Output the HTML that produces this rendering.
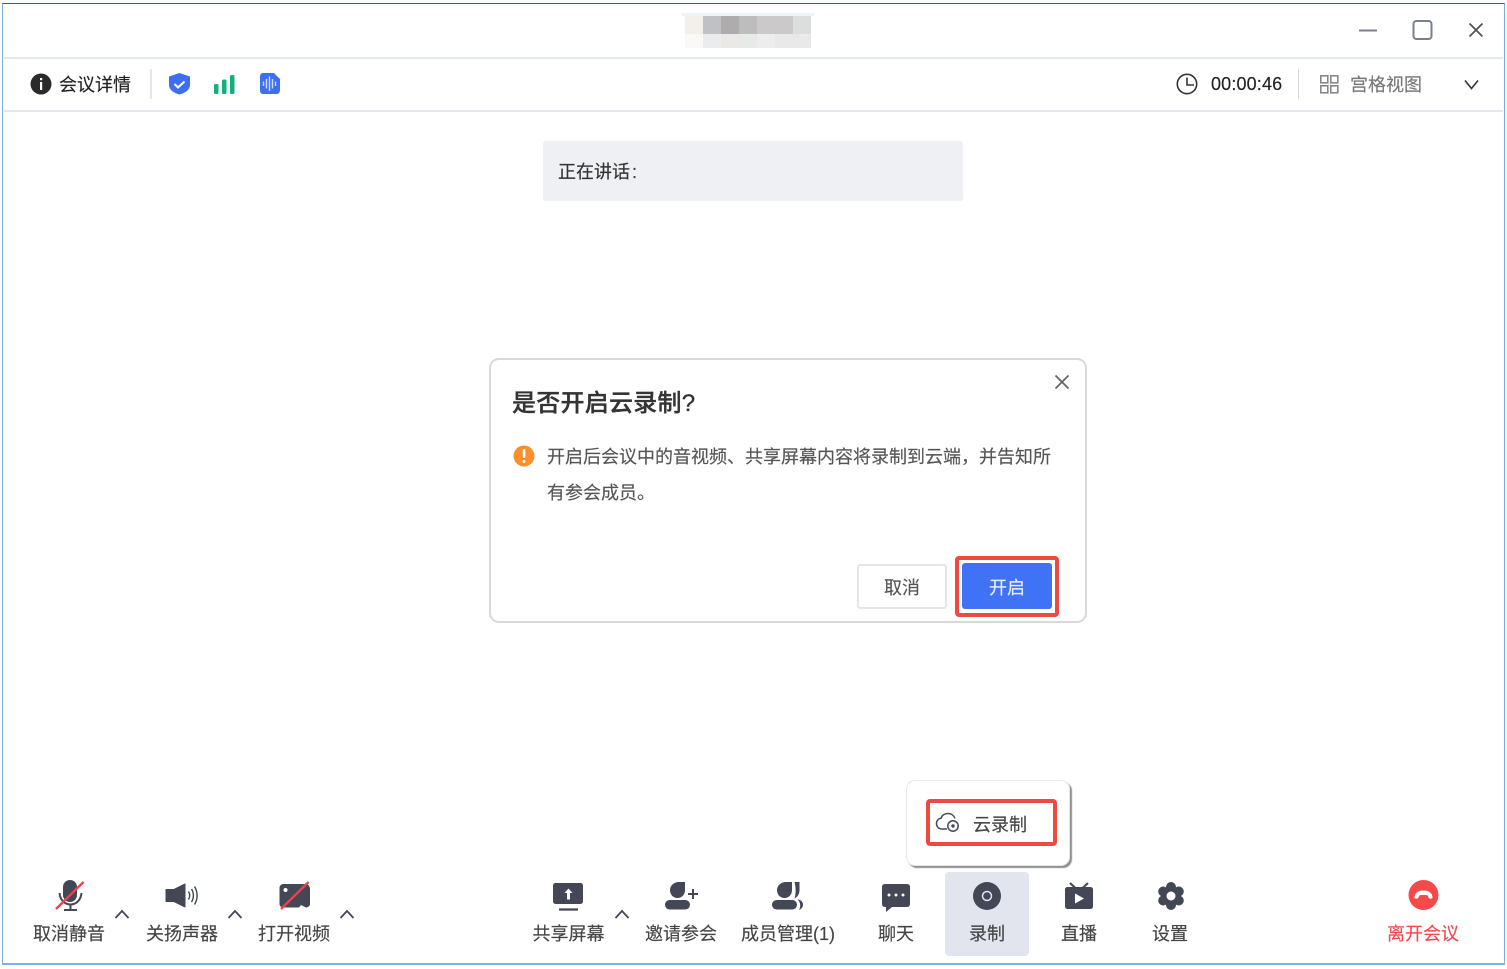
<!DOCTYPE html>
<html lang="zh"><head><meta charset="utf-8"><title>会议</title>
<style>
html,body{margin:0;padding:0;background:#fff;}
body{width:1507px;height:969px;position:relative;overflow:hidden;font-family:"Liberation Sans","Noto Sans CJK SC",sans-serif;}
.a{position:absolute;}
.t{position:absolute;white-space:nowrap;font-size:18px;line-height:24px;color:#444;-webkit-text-stroke:.15px currentColor;}
.c{transform:translateX(-50%);}
.b{position:absolute;}
</style></head><body>
<!-- window frame -->
<div class="a" style="left:2px;top:3px;width:1501px;height:959px;border-left:1.5px solid #7db0e2;border-right:1.5px solid #7db0e2;border-bottom:2.5px solid #7db0e2;border-top:1.5px solid #1f66ad;box-sizing:content-box;"></div>
<div class="a" style="left:4px;top:57px;width:1499px;height:2px;background:#e4e6ef;"></div>
<div class="a" style="left:4px;top:109.500px;width:1499px;height:2px;background:#e4e6ef;"></div>
<div class="a" style="left:150px;top:69px;width:2px;height:30px;background:#e6e6e6;"></div>
<div class="a" style="left:1298px;top:69px;width:1px;height:30px;background:#d6d6d6;"></div>

<!-- blurred title -->
<div class="a" style="left:682px;top:13px;width:132px;height:3px;background:#f0f3f5;"></div>
<div class="b" style="left:685px;top:16px;width:18px;height:18px;background:#f3f0ec;"></div>
<div class="b" style="left:703px;top:16px;width:18px;height:18px;background:#c0c1c5;"></div>
<div class="b" style="left:721px;top:16px;width:18px;height:18px;background:#aeacac;"></div>
<div class="b" style="left:739px;top:16px;width:18px;height:18px;background:#bdbdbd;"></div>
<div class="b" style="left:757px;top:16px;width:36px;height:18px;background:#cbc9c9;"></div>
<div class="b" style="left:793px;top:16px;width:18px;height:18px;background:#dcdedd;"></div>
<div class="b" style="left:685px;top:34px;width:18px;height:14px;background:#faf9f7;"></div>
<div class="b" style="left:703px;top:34px;width:18px;height:14px;background:#eaecee;"></div>
<div class="b" style="left:721px;top:34px;width:18px;height:14px;background:#ebe9e6;"></div>
<div class="b" style="left:739px;top:34px;width:18px;height:14px;background:#e8eaea;"></div>
<div class="b" style="left:757px;top:34px;width:18px;height:14px;background:#ededed;"></div>
<div class="b" style="left:775px;top:34px;width:36px;height:14px;background:#e9e9e9;"></div>

<!-- speaking bar -->
<div class="a" style="left:543px;top:141px;width:420px;height:60px;background:#eff0f4;border-radius:3px;"></div>
<div class="t" style="left:558px;top:160px;color:#333;">正在讲话<span style="margin-left:2px;">:</span></div>

<!-- top text -->
<div class="t" style="left:59px;top:73px;color:#222;">会议详情</div>
<div class="t" style="left:1211px;top:72px;color:#222;letter-spacing:.15px;">00:00:46</div>
<div class="t" style="left:1350px;top:73px;color:#777;">宫格视图</div>

<!-- dialog -->
<div class="a" style="left:489px;top:358px;width:594px;height:261px;background:#fff;border:2px solid #d9d9d9;border-radius:10px;"></div>
<div class="t" style="left:512px;top:388px;font-size:24px;line-height:32px;font-weight:500;color:#333;-webkit-text-stroke:.35px #333;letter-spacing:.25px;">是否开启云录制?</div>
<div class="t" style="left:547px;top:445px;color:#555;">开启后会议中的音视频、共享屏幕内容将录制到云端&#xFF0C;并告知所</div>
<div class="t" style="left:547px;top:481px;color:#555;">有参会成员。</div>
<div class="a" style="left:857px;top:564px;width:86px;height:41px;border:2px solid #e6e6e6;border-radius:3px;background:#fff;"></div>
<div class="t c" style="left:902px;top:576px;color:#555;">取消</div>
<div class="a" style="left:955px;top:556px;width:96px;height:53px;border:4px solid #ef4a42;border-radius:4px;"></div>
<div class="a" style="left:962px;top:563px;width:90px;height:46px;background:#3f72f4;border-radius:3px;"></div>
<div class="t c" style="left:1007px;top:576px;color:#e8eeff;">开启</div>

<!-- popup -->
<div class="a" style="left:906px;top:780px;width:162px;height:84px;background:#fff;border:1px solid #e6e8f0;border-radius:9px;box-shadow:2px 2px 1px #8f8f8f;"></div>
<div class="a" style="left:926px;top:799px;width:123px;height:39px;border:4px solid #ef4a42;border-radius:4px;"></div>
<div class="t" style="left:973px;top:813px;color:#444;">云录制</div>

<!-- toolbar highlight -->
<div class="a" style="left:945px;top:872px;width:84px;height:84px;background:#e3e5ee;border-radius:4px;"></div>

<!-- toolbar labels -->
<div class="t c" style="left:69px;top:922px;">取消静音</div>
<div class="t c" style="left:182px;top:922px;">关扬声器</div>
<div class="t c" style="left:294px;top:922px;">打开视频</div>
<div class="t c" style="left:568.500px;top:922px;">共享屏幕</div>
<div class="t c" style="left:681px;top:922px;">邀请参会</div>
<div class="t c" style="left:788px;top:922px;">成员管理(1)</div>
<div class="t c" style="left:896px;top:922px;">聊天</div>
<div class="t c" style="left:987px;top:922px;">录制</div>
<div class="t c" style="left:1079px;top:922px;">直播</div>
<div class="t c" style="left:1170px;top:922px;">设置</div>
<div class="t c" style="left:1423px;top:922px;color:#f4474a;">离开会议</div>

<!-- icons -->
<svg class="a" style="left:0;top:0;" width="1507" height="969" viewBox="0 0 1507 969" fill="none">
<!-- window controls -->
<path d="M1359 30.500H1377" stroke="#7a7f8c" stroke-width="2"/>
<rect x="1413.500" y="21" width="18" height="18" rx="3" stroke="#7a7f8c" stroke-width="2"/>
<path d="M1469.500 23.500L1482.500 36.500M1482.500 23.500L1469.500 36.500" stroke="#555" stroke-width="1.800"/>

<!-- info -->
<circle cx="41" cy="84" r="10.500" fill="#2a2a2a"/>
<rect x="40" y="82" width="2.200" height="8" fill="#fff"/><rect x="40" y="78" width="2.200" height="2.200" fill="#fff"/>
<!-- shield -->
<path d="M179.500 73L190 76.500V85C190 90 185 93 179.500 94.500C174 93 169 90 169 85V76.500Z" fill="#3d6ff0"/>
<path d="M174.500 84L178 87.500L184.500 81.500" stroke="#fff" stroke-width="2"/>
<!-- signal -->
<rect x="214" y="84" width="4.500" height="10" rx="1.500" fill="#12b07a"/>
<rect x="222" y="79.500" width="4.500" height="14.500" rx="1.500" fill="#12b07a"/>
<rect x="230" y="75" width="4.500" height="19" rx="1.500" fill="#12b07a"/>
<!-- audio badge -->
<path d="M263 73H274L280 79V90C280 92.500 278.500 94 276.500 94H263C261 94 260 92.500 260 90V77C260 74.500 261 73 263 73Z" fill="#3d6ff0"/>
<path d="M263.500 81.500V86M266.500 79V88.500M269.500 76.500V91M272.500 79V88.500M275.500 81.500V86" stroke="#cddcff" stroke-width="1.400"/>
<!-- clock -->
<circle cx="1187" cy="84" r="9.700" stroke="#333" stroke-width="1.600"/>
<path d="M1187 77.500V85H1194" stroke="#333" stroke-width="1.600"/>
<!-- grid -->
<g stroke="#888" stroke-width="1.600">
<rect x="1320.800" y="75.800" width="7" height="7"/><rect x="1330.800" y="75.800" width="7" height="7"/>
<rect x="1320.800" y="85.800" width="7" height="7"/><rect x="1330.800" y="85.800" width="7" height="7"/>
</g>
<path d="M1465 80.500L1471.500 88.500L1478 80.500" stroke="#333" stroke-width="1.600"/>

<!-- dialog icons -->
<path d="M1055.500 375.500L1068.500 388.500M1068.500 375.500L1055.500 388.500" stroke="#666" stroke-width="1.800"/>
<circle cx="524" cy="456" r="10.500" fill="#fa8f2c"/>
<rect x="522.800" y="449" width="2.600" height="9" rx="1.200" fill="#fff"/><circle cx="524" cy="461.500" r="1.500" fill="#fff"/>

<!-- cloud icon -->
<path d="M947 829H942C938.500 829 936.500 826.500 936.500 823.500C936.500 820.500 938.500 818.500 941 818.300C942 815 945 813.500 948 813.500C951.500 813.500 954 815.800 955 818.500" stroke="#444c5a" stroke-width="1.500"/>
<circle cx="953" cy="826" r="5.200" stroke="#444c5a" stroke-width="1.500"/><circle cx="953" cy="826" r="1.700" fill="#444c5a"/>

<!-- mic -->
<rect x="63" y="880" width="14" height="22" rx="7" fill="#434756"/>
<path d="M59.500 893C60 900 65 904.500 70.500 904.500C76 904.500 81 900 81.500 893" stroke="#434756" stroke-width="2"/>
<path d="M70.500 904V910M64 910H77" stroke="#434756" stroke-width="2"/>
<path d="M83.500 882L56 909" stroke="#f2404a" stroke-width="2.300"/>
<!-- caret -->
<path d="M115.500 918L122 911L128.500 918M228.500 918L235 911L241.500 918M340.500 918L347 911L353.500 918M615.500 918L622 911L628.500 918" stroke="#434756" stroke-width="1.800"/>
<!-- speaker -->
<path d="M166 889.500H174L185 884V907L174 901.500H166Z" fill="#434756" stroke="#434756" stroke-linejoin="round"/>
<path d="M188.500 891.500C190 894 190 897 188.500 899.500M191.500 889C194 893 194 898 191.500 902M194.500 886.500C198 892 198 899 194.500 904.500" stroke="#434756" stroke-width="1.400"/>
<!-- camera -->
<path d="M284 884H305C308 884 310 886 310 889V904C310 906 308 907.500 306 907.500L301 905L299 907.500H284C281 907.500 279.500 906 279.500 904V888C279.500 885.500 281 884 284 884Z" fill="#434756"/>
<circle cx="285.500" cy="890" r="2" fill="#fff"/>
<path d="M308.500 882L281 909" stroke="#f2404a" stroke-width="2.300"/>
<!-- share -->
<rect x="553" y="883" width="30" height="21" rx="2.500" fill="#434756"/>
<path d="M559 909.500H578" stroke="#434756" stroke-width="2.200"/>
<path d="M568.500 888.500L572.500 893H570V899.500H567V893H564.500Z" fill="#fff"/>
<!-- invite -->
<path d="M679 882H685V890C685 895 681.500 898 677.500 898C673 898 670 894.500 670 890C670 885.500 674 882 679 882Z" fill="#434756"/>
<rect x="665" y="900" width="25" height="9.500" rx="4.700" fill="#434756"/>
<path d="M688 894H698M693 889V899" stroke="#434756" stroke-width="2"/>
<!-- members -->
<path d="M786 882H792V890C792 895 788.500 898 784.500 898C780 898 777 894.500 777 890C777 885.500 781 882 786 882Z" fill="#434756"/>
<path d="M794.500 882H799.500V890C799.500 894 797.500 897 794.500 898.500C796 894 796 887 794.500 882Z" fill="#434756"/>
<rect x="772" y="900" width="25" height="9.500" rx="4.700" fill="#434756"/>
<path d="M797.500 899.500C803.500 899.500 805.500 907.500 799 910C801 906.500 800.500 902 797.500 899.500Z" fill="#434756"/>
<!-- chat -->
<path d="M885 884H907C909 884 910 885.500 910 887V904C910 905.500 909 907 907 907H892L886 912V907H885C883 907 882 905.500 882 904V887C882 885.500 883 884 885 884Z" fill="#434756"/>
<circle cx="889" cy="895" r="1.500" fill="#fff"/><circle cx="896" cy="895" r="1.500" fill="#fff"/><circle cx="903" cy="895" r="1.500" fill="#fff"/>
<!-- record -->
<circle cx="987" cy="896" r="14" fill="#434756"/><circle cx="987" cy="896" r="4.500" stroke="#e3e5ee" stroke-width="1.500"/>
<!-- live -->
<rect x="1065" y="887" width="28" height="22" rx="2.500" fill="#434756"/>
<path d="M1070 883L1076 888.500M1088 883L1082 888.500" stroke="#434756" stroke-width="2.200"/>
<path d="M1075 893.500L1084 898.500L1075 903.500Z" fill="#fff"/>
<!-- settings -->
<g fill="#434756">
<circle cx="1171" cy="896" r="10"/>
<circle cx="1171" cy="887" r="5"/><circle cx="1171" cy="905" r="5"/>
<circle cx="1163.200" cy="891.500" r="5"/><circle cx="1178.800" cy="891.500" r="5"/>
<circle cx="1163.200" cy="900.500" r="5"/><circle cx="1178.800" cy="900.500" r="5"/>
</g>
<circle cx="1171" cy="896" r="4.500" fill="#fff"/>
<!-- leave -->
<circle cx="1423.500" cy="895" r="15" fill="#f64a4a"/>
<path d="M1414.500 897.500C1414.500 892.500 1419 890.500 1423.500 890.500C1428 890.500 1432.500 892.500 1432.500 897.500C1432.500 898.700 1431 899 1429.500 898.500C1428.500 898 1428 897 1428 895.500C1425.500 894.800 1421.500 894.800 1419 895.500C1419 897 1418.500 898 1417.500 898.500C1416 899 1414.500 898.700 1414.500 897.500Z" fill="#fff"/>
</svg>
</body></html>
